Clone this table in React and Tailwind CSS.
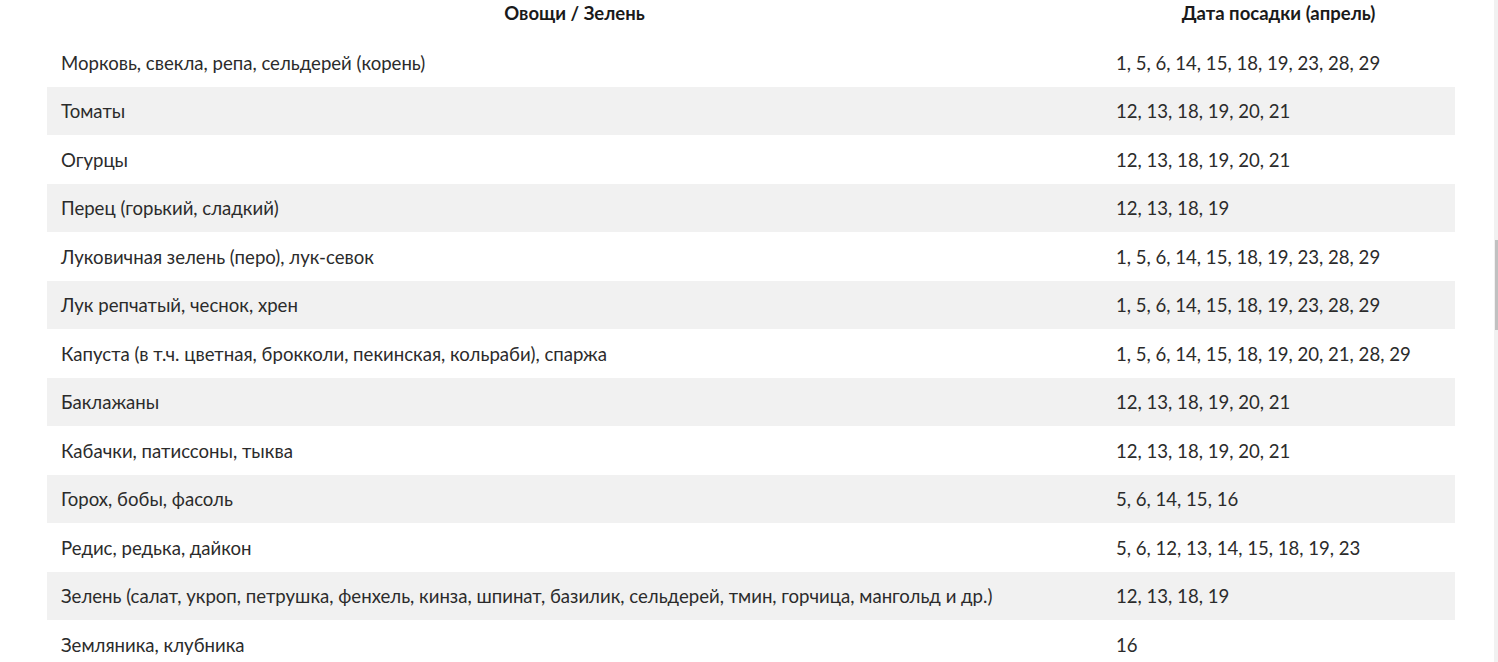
const rows = [
  ['Морковь, свекла, репа, сельдерей (корень)', '1, 5, 6, 14, 15, 18, 19, 23, 28, 29'],
  ['Томаты', '12, 13, 18, 19, 20, 21'],
  ['Огурцы', '12, 13, 18, 19, 20, 21'],
  ['Перец (горький, сладкий)', '12, 13, 18, 19'],
  ['Луковичная зелень (перо), лук-севок', '1, 5, 6, 14, 15, 18, 19, 23, 28, 29'],
  ['Лук репчатый, чеснок, хрен', '1, 5, 6, 14, 15, 18, 19, 23, 28, 29'],
  ['Капуста (в т.ч. цветная, брокколи, пекинская, кольраби), спаржа', '1, 5, 6, 14, 15, 18, 19, 20, 21, 28, 29'],
  ['Баклажаны', '12, 13, 18, 19, 20, 21'],
  ['Кабачки, патиссоны, тыква', '12, 13, 18, 19, 20, 21'],
  ['Горох, бобы, фасоль', '5, 6, 14, 15, 16'],
  ['Редис, редька, дайкон', '5, 6, 12, 13, 14, 15, 18, 19, 23'],
  ['Зелень (салат, укроп, петрушка, фенхель, кинза, шпинат, базилик, сельдерей, тмин, горчица, мангольд и др.)', '12, 13, 18, 19'],
  ['Земляника, клубника', '16'],
];

export default function App() {
  return (
    <div className="flex h-[662px] overflow-hidden bg-white font-['Lato',sans-serif] text-[#2b2b2b]">
      <div className="flex-1 pl-[47px] pr-[39px]">
        <div className="flex h-[38px] items-start text-[18.5px] font-bold text-[#1a1a1a]">
          <div className="w-[1055px] text-center">Овощи / Зелень</div>
          <div className="flex-1 text-center">Дата посадки (апрель)</div>
        </div>
        {rows.map(([name, dates], i) => (
          <div
            key={name}
            className={`flex h-[48.5px] items-center pt-[3px] text-[18.6px] ${i % 2 === 1 ? 'bg-[#f1f1f1]' : 'bg-white'}`}
          >
            <div className="w-[1055px] pl-[14px]">{name}</div>
            <div className="flex-1 pl-[14px]">{dates}</div>
          </div>
        ))}
      </div>
      <div className="w-[4px] bg-[#f1f1f1] pl-[1px]">
        <div className="mt-[240px] h-[90px] w-[3px] bg-[#c1c1c1]" />
      </div>
    </div>
  );
}
